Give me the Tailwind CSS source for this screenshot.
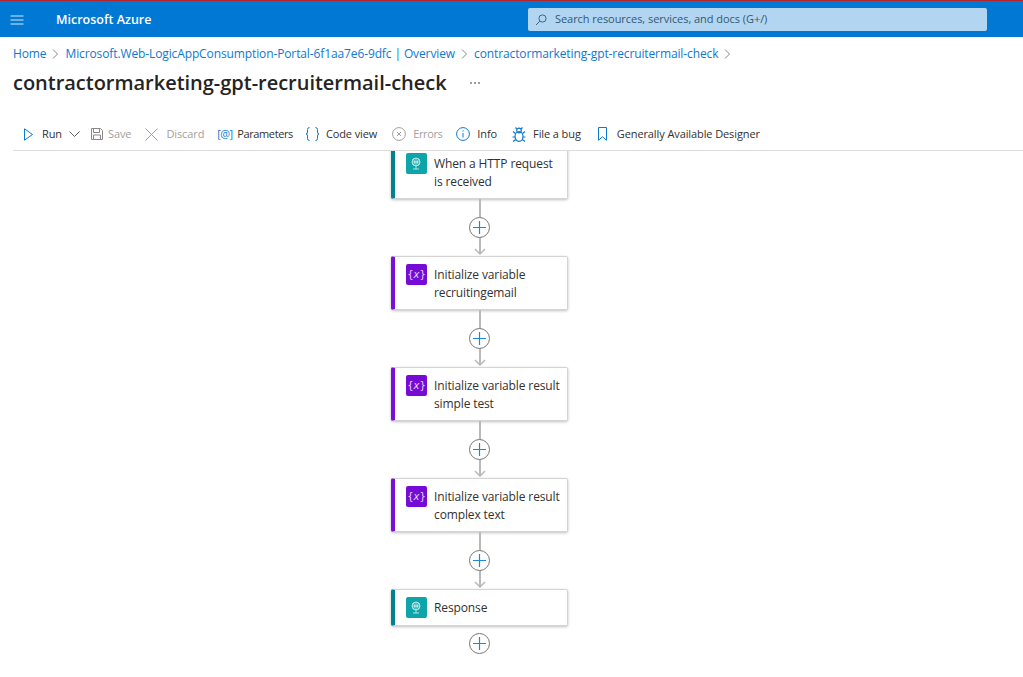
<!DOCTYPE html>
<html>
<head>
<meta charset="utf-8">
<script src="https://cdn.jsdelivr.net/npm/@tailwindcss/browser@4"></script>
</head>
<body class="w-[1023px] h-[677px] overflow-hidden bg-white font-['Open_Sans','Noto_Sans',sans-serif] text-[#323130]">
<header class="h-[37px] bg-[#0078d4] border-t-[1px] border-[#b3262a] pt-[2px] flex items-center relative">
  <svg class="ml-[10px] w-[14px] h-[10px]" viewBox="0 0 14 10" fill="none" stroke="#d6e9f8" stroke-width="1"><path d="M0.5 1H13.5M0.5 5H13.5M0.5 9H13.5"/></svg>
  <span class="ml-[32px] text-[12.5px] font-semibold text-white">Microsoft Azure</span>
  <div class="absolute left-[528px] top-[7px] w-[459px] h-[23px] bg-[#b2d6f2] rounded-[2px] flex items-center">
    <svg class="ml-[7px] w-[12px] h-[12px]" viewBox="0 0 12 12" fill="none" stroke="#3f6382" stroke-width="1"><circle cx="7.5" cy="4.5" r="3.6"/><path d="M4.8 7.2L1 11"/></svg>
    <span class="ml-[8px] text-[11px] text-[#34566f] tracking-[-0.05px]">Search resources, services, and docs (G+/)</span>
  </div>
</header>

<nav class="h-[30px] pl-[13px] flex items-center text-[12px] text-[#0f78d2] tracking-[-0.115px] mt-[2px] pb-[1px]">
  <span>Home</span>
  <svg class="ml-[6px] mr-[6px] w-[7px] h-[10px]" viewBox="0 0 7 10" fill="none" stroke="#8a8886"><path d="M1 0.5L5.5 5L1 9.5"/></svg>
  <span>Microsoft.Web-LogicAppConsumption-Portal-6f1aa7e6-9dfc | Overview</span>
  <svg class="ml-[6px] mr-[6px] w-[7px] h-[10px]" viewBox="0 0 7 10" fill="none" stroke="#8a8886"><path d="M1 0.5L5.5 5L1 9.5"/></svg>
  <span>contractormarketing-gpt-recruitermail-check</span>
  <svg class="ml-[6px] w-[7px] h-[10px]" viewBox="0 0 7 10" fill="none" stroke="#8a8886"><path d="M1 0.5L5.5 5L1 9.5"/></svg>
</nav>

<div class="h-[29px] pl-[13px] pb-[2px] flex items-center">
  <h1 class="text-[20px] font-semibold text-[#252423] leading-none tracking-[-0.02px]">contractormarketing-gpt-recruitermail-check</h1>
  <span class="ml-[23px] flex gap-[2px]">
    <i class="w-[2px] h-[2px] bg-[#a19f9d] block"></i><i class="w-[2px] h-[2px] bg-[#a19f9d] block"></i><i class="w-[2px] h-[2px] bg-[#a19f9d] block"></i>
  </span>
</div>

<div class="ml-[13px] mt-[22px] h-[31px] pb-[2px] border-b border-[#dcdcdc] flex items-center text-[11px] tracking-[-0.1px]">
  <svg class="ml-[11px] w-[9px] h-[13px]" viewBox="0 0 9 13" fill="none" stroke="#0f78d2"><path d="M0.5 0.8L8.500 6.500L0.500 12.200Z"/></svg>
  <span class="ml-[9px]">Run</span>
  <svg class="ml-[7px] w-[11px] h-[6px]" viewBox="0 0 11 6" fill="none" stroke="#605e5c"><path d="M0.5 0.5L5.5 5.5L10.5 0.5"/></svg>
  <svg class="ml-[11px] w-[12px] h-[12px]" viewBox="0 0 12 12" fill="none" stroke="#8a8886"><path d="M0.5 0.5H9.500L11.500 2.500V11.500H0.5ZM2.500 0.5V4.500H8.500V0.5M2.500 11.500V7H9.500V11.500"/></svg>
  <span class="ml-[5px] text-[#a19f9d]">Save</span>
  <svg class="ml-[14px] w-[13px] h-[13px]" viewBox="0 0 13 13" fill="none" stroke="#a19f9d"><path d="M0.5 0.5L12.5 12.5M12.5 0.5L0.5 12.5"/></svg>
  <span class="ml-[8px] text-[#a19f9d]">Discard</span>
  <span class="ml-[13px] w-[16px] text-[11px] text-[#0f78d2] tracking-[-0.7px] whitespace-nowrap">[@]</span>
  <span class="ml-[4px] tracking-[-0.4px]">Parameters</span>
  <svg class="ml-[13px] w-[13px] h-[14px]" viewBox="0 0 13 14" fill="none" stroke="#0f78d2"><path d="M3.500 0.500Q1.500 0.500 1.500 2.500V5Q1.500 7 0 7Q1.500 7 1.500 9V11.500Q1.500 13.500 3.500 13.500M9.500 0.500Q11.500 0.500 11.500 2.500V5Q11.500 7 13 7Q11.500 7 11.500 9V11.500Q11.500 13.500 9.500 13.500"/></svg>
  <span class="ml-[7px]">Code view</span>
  <svg class="ml-[15px] w-[14px] h-[14px]" viewBox="0 0 14 14" fill="none" stroke="#a19f9d"><circle cx="7" cy="7" r="6.400"/><path d="M5 5L9 9M9 5L5 9"/></svg>
  <span class="ml-[7px] text-[#a19f9d] tracking-[-0.4px]">Errors</span>
  <svg class="ml-[14px] w-[14px] h-[14px]" viewBox="0 0 14 14" fill="none" stroke="#0f78d2"><circle cx="7" cy="7" r="6.400"/><path d="M7 6V10.500M7 3.400V4.600"/></svg>
  <span class="ml-[7px]">Info</span>
  <svg class="ml-[15px] w-[14px] h-[15px]" viewBox="0 0 14 15" fill="none" stroke="#0f78d2" stroke-width="1.200"><ellipse cx="7" cy="9.500" rx="4" ry="4.800"/><circle cx="7" cy="3.500" r="2.300"/><path d="M3.500 0.500L5 2M10.500 0.500L9 2M1 4.500L3.800 6.800M13 4.500L10.200 6.800M0.500 10H3M13.500 10H11M1 14.500L3.800 12.500M13 14.500L10.200 12.500"/></svg>
  <span class="ml-[7px]">File a bug</span>
  <svg class="ml-[17px] w-[9px] h-[14px]" viewBox="0 0 9 14" fill="none" stroke="#0f78d2"><path d="M0.500 0.500H8.500V13.200L4.500 9.800L0.500 13.200Z"/></svg>
  <span class="ml-[10px]">Generally Available Designer</span>
</div>

<main class="h-[526px] overflow-hidden flex flex-col items-center w-[959px] text-[12px] leading-[18px] tracking-[-0.12px]">
  <section class="-mt-[6px] w-[177px] h-[54px] shrink-0 bg-white rounded-[2px] border border-[#d4d4d4] border-l-[4px] border-l-[#00838f] shadow-[0_1px_3px_rgba(0,0,0,0.25)] flex pl-[11px] pt-[7px]">
    <div class="w-[21px] h-[21px] rounded-[2px] bg-[#0da5a9] shrink-0 flex items-center justify-center">
      <svg class="w-[13px] h-[13px]" viewBox="0 0 13 13" fill="none" stroke="#d9f3f4" stroke-width="0.8"><circle cx="6" cy="5" r="4"/><path d="M2 5H10M6 1V9M3.500 2Q6 5 3.500 8M8.500 2Q6 5 8.500 8M3 12H9M6 9V12"/></svg>
    </div>
    <p class="ml-[7px] mt-[2px] text-[#323130]">When a HTTP request<br>is received</p>
  </section>

  <div class="relative w-[177px] h-[57px] shrink-0">
    <div class="absolute left-[88px] top-0 w-[2px] h-[55px] bg-[#b9b9b9]"></div>
    <svg class="absolute left-[83px] top-[49px] w-[12px] h-[7px]" viewBox="0 0 12 7" fill="none" stroke="#b9b9b9" stroke-width="1.500"><path d="M1 1L6 6L11 1"/></svg>
    <div class="absolute left-[78px] top-[18px] w-[21px] h-[21px] rounded-full bg-white border border-[#777] flex items-center justify-center">
      <svg class="w-[13px] h-[13px]" viewBox="0 0 13 13" stroke="#1e88dc" stroke-width="1.200"><path d="M6.500 0V13M0 6.500H13"/></svg>
    </div>
  </div>

  <section class="w-[177px] h-[54px] shrink-0 bg-white rounded-[2px] border border-[#d4d4d4] border-l-[4px] border-l-[#7b0fd8] shadow-[0_1px_3px_rgba(0,0,0,0.25)] flex pl-[11px] pt-[7px]">
    <div class="w-[21px] h-[21px] rounded-[2px] bg-[#770bd6] shrink-0 flex items-center justify-center text-[10px] leading-none text-[#e5d2f7] font-['DejaVu_Sans',sans-serif] tracking-[0px]">{<i>x</i>}</div>
    <p class="ml-[7px] mt-[2px] text-[#323130]">Initialize variable recruitingemail</p>
  </section>

  <div class="relative w-[177px] h-[57px] shrink-0">
    <div class="absolute left-[88px] top-0 w-[2px] h-[55px] bg-[#b9b9b9]"></div>
    <svg class="absolute left-[83px] top-[49px] w-[12px] h-[7px]" viewBox="0 0 12 7" fill="none" stroke="#b9b9b9" stroke-width="1.500"><path d="M1 1L6 6L11 1"/></svg>
    <div class="absolute left-[78px] top-[18px] w-[21px] h-[21px] rounded-full bg-white border border-[#777] flex items-center justify-center">
      <svg class="w-[13px] h-[13px]" viewBox="0 0 13 13" stroke="#1e88dc" stroke-width="1.200"><path d="M6.500 0V13M0 6.500H13"/></svg>
    </div>
  </div>

  <section class="w-[177px] h-[54px] shrink-0 bg-white rounded-[2px] border border-[#d4d4d4] border-l-[4px] border-l-[#7b0fd8] shadow-[0_1px_3px_rgba(0,0,0,0.25)] flex pl-[11px] pt-[7px]">
    <div class="w-[21px] h-[21px] rounded-[2px] bg-[#770bd6] shrink-0 flex items-center justify-center text-[10px] leading-none text-[#e5d2f7] font-['DejaVu_Sans',sans-serif] tracking-[0px]">{<i>x</i>}</div>
    <p class="ml-[7px] mt-[2px] text-[#323130]">Initialize variable result simple test</p>
  </section>

  <div class="relative w-[177px] h-[57px] shrink-0">
    <div class="absolute left-[88px] top-0 w-[2px] h-[55px] bg-[#b9b9b9]"></div>
    <svg class="absolute left-[83px] top-[49px] w-[12px] h-[7px]" viewBox="0 0 12 7" fill="none" stroke="#b9b9b9" stroke-width="1.500"><path d="M1 1L6 6L11 1"/></svg>
    <div class="absolute left-[78px] top-[18px] w-[21px] h-[21px] rounded-full bg-white border border-[#777] flex items-center justify-center">
      <svg class="w-[13px] h-[13px]" viewBox="0 0 13 13" stroke="#1e88dc" stroke-width="1.200"><path d="M6.500 0V13M0 6.500H13"/></svg>
    </div>
  </div>

  <section class="w-[177px] h-[54px] shrink-0 bg-white rounded-[2px] border border-[#d4d4d4] border-l-[4px] border-l-[#7b0fd8] shadow-[0_1px_3px_rgba(0,0,0,0.25)] flex pl-[11px] pt-[7px]">
    <div class="w-[21px] h-[21px] rounded-[2px] bg-[#770bd6] shrink-0 flex items-center justify-center text-[10px] leading-none text-[#e5d2f7] font-['DejaVu_Sans',sans-serif] tracking-[0px]">{<i>x</i>}</div>
    <p class="ml-[7px] mt-[2px] text-[#323130]">Initialize variable result complex text</p>
  </section>

  <div class="relative w-[177px] h-[57px] shrink-0">
    <div class="absolute left-[88px] top-0 w-[2px] h-[55px] bg-[#b9b9b9]"></div>
    <svg class="absolute left-[83px] top-[49px] w-[12px] h-[7px]" viewBox="0 0 12 7" fill="none" stroke="#b9b9b9" stroke-width="1.500"><path d="M1 1L6 6L11 1"/></svg>
    <div class="absolute left-[78px] top-[18px] w-[21px] h-[21px] rounded-full bg-white border border-[#777] flex items-center justify-center">
      <svg class="w-[13px] h-[13px]" viewBox="0 0 13 13" stroke="#1e88dc" stroke-width="1.200"><path d="M6.500 0V13M0 6.500H13"/></svg>
    </div>
  </div>

  <section class="w-[177px] h-[37px] shrink-0 bg-white rounded-[2px] border border-[#d4d4d4] border-l-[4px] border-l-[#00838f] shadow-[0_1px_3px_rgba(0,0,0,0.25)] flex items-center pl-[11px]">
    <div class="w-[21px] h-[21px] rounded-[2px] bg-[#0da5a9] shrink-0 flex items-center justify-center">
      <svg class="w-[13px] h-[13px]" viewBox="0 0 13 13" fill="none" stroke="#d9f3f4" stroke-width="0.8"><circle cx="6" cy="5" r="4"/><path d="M2 5H10M6 1V9M3.500 2Q6 5 3.500 8M8.500 2Q6 5 8.500 8M3 12H9M6 9V12"/></svg>
    </div>
    <p class="ml-[7px] text-[#323130]">Response</p>
  </section>

  <div class="mt-[7px] w-[21px] h-[21px] shrink-0 rounded-full bg-white border border-[#777] flex items-center justify-center">
    <svg class="w-[13px] h-[13px]" viewBox="0 0 13 13" stroke="#1e88dc" stroke-width="1.200"><path d="M6.500 0V13M0 6.500H13"/></svg>
  </div>
</main>
</body>
</html>
